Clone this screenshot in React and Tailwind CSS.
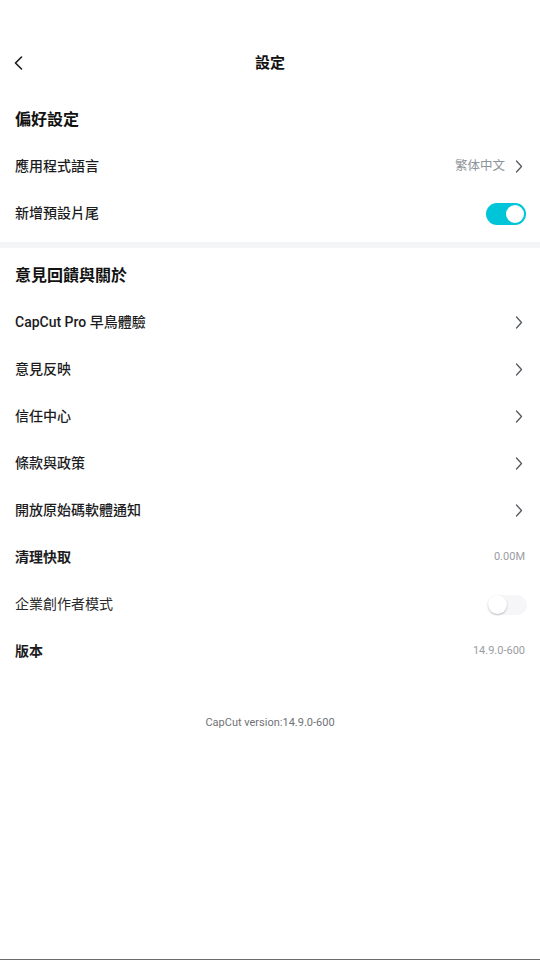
import React from "react";

function Chevron({ className = "" }) {
  return (
    <svg width="8" height="13" viewBox="0 0 8 13" fill="none" className={`mr-[3px] ${className}`}>
      <path d="M1.5 1L6.5 6.5L1.5 12" stroke="#555a60" strokeWidth="1.3" strokeLinecap="round" strokeLinejoin="round" />
    </svg>
  );
}

function Row({ label, right, weight = "font-medium", color = "text-[#1c1c1e]" }) {
  return (
    <div className="flex h-[47px] items-center justify-between pl-[15px] pr-[14px]">
      <span className={`text-[14px] ${weight} ${color}`}>{label}</span>
      {right}
    </div>
  );
}

function SectionTitle({ children }) {
  return (
    <div className="flex h-[47px] items-center pl-[15px]">
      <span className="text-[16px] font-bold text-[#121212]">{children}</span>
    </div>
  );
}

export default function App() {
  const font = { fontFamily: 'Roboto, "Noto Sans CJK TC", sans-serif' };
  return (
    <div className="relative flex h-[960px] w-[540px] flex-col bg-white" style={font}>
      <div className="h-[40px]" />
      <div className="relative flex h-[46px] items-center justify-center">
        <div className="absolute left-[13px] top-[16px]">
          <svg width="11" height="14" viewBox="0 0 11 14" fill="none">
            <path d="M8.5 1L2.5 7L8.5 13" stroke="#1c1c1e" strokeWidth="1.6" strokeLinecap="round" strokeLinejoin="round" />
          </svg>
        </div>
        <span className="text-[15px] font-bold text-[#121212]">設定</span>
      </div>
      <div className="h-[10px]" />
      <SectionTitle>偏好設定</SectionTitle>
      <Row
        label="應用程式語言"
        right={
          <div className="flex items-center gap-[10px]">
            <span className="text-[12.5px] text-[#8e9299]">繁体中文</span>
            <Chevron />
          </div>
        }
      />
      <Row
        label="新增預設片尾"
        right={
          <div className="flex h-[22px] w-[40px] items-center justify-end rounded-full bg-[#00c5d9] pr-[2px]">
            <div className="h-[18px] w-[18px] rounded-full bg-white" />
          </div>
        }
      />
      <div className="mt-[5px] h-[6px] bg-[#f4f5f7]" />
      <div className="h-[4px]" />
      <SectionTitle>意見回饋與關於</SectionTitle>
      <Row label="CapCut Pro 早鳥體驗" right={<Chevron />} />
      <Row label="意見反映" right={<Chevron />} />
      <Row label="信任中心" right={<Chevron />} />
      <Row label="條款與政策" right={<Chevron />} />
      <Row label="開放原始碼軟體通知" right={<Chevron />} />
      <Row
        label="清理快取"
        weight="font-bold"
        right={<span className="mr-[1px] text-[11px] text-[#9a9da3]">0.00M</span>}
      />
      <Row
        label="企業創作者模式"
        weight="font-normal"
        color="text-[#2a2a2c]"
        right={
          <div className="-mr-[1px] flex h-[20px] w-[39px] items-center rounded-full bg-[#f6f6f8]">
            <div className="h-[19px] w-[19px] rounded-full bg-white shadow-[0_1px_2px_rgba(0,0,0,0.25)]" />
          </div>
        }
      />
      <Row
        label="版本"
        weight="font-bold"
        right={<span className="mr-[1px] text-[11px] text-[#9a9da3]">14.9.0-600</span>}
      />
      <div className="mt-[40px] flex h-[16px] items-center justify-center">
        <span className="text-[11px] text-[#6f7277]">CapCut version:14.9.0-600</span>
      </div>
      <div className="flex-1" />
      <div className="h-[1px] bg-[#6b6b6b]" />
    </div>
  );
}
